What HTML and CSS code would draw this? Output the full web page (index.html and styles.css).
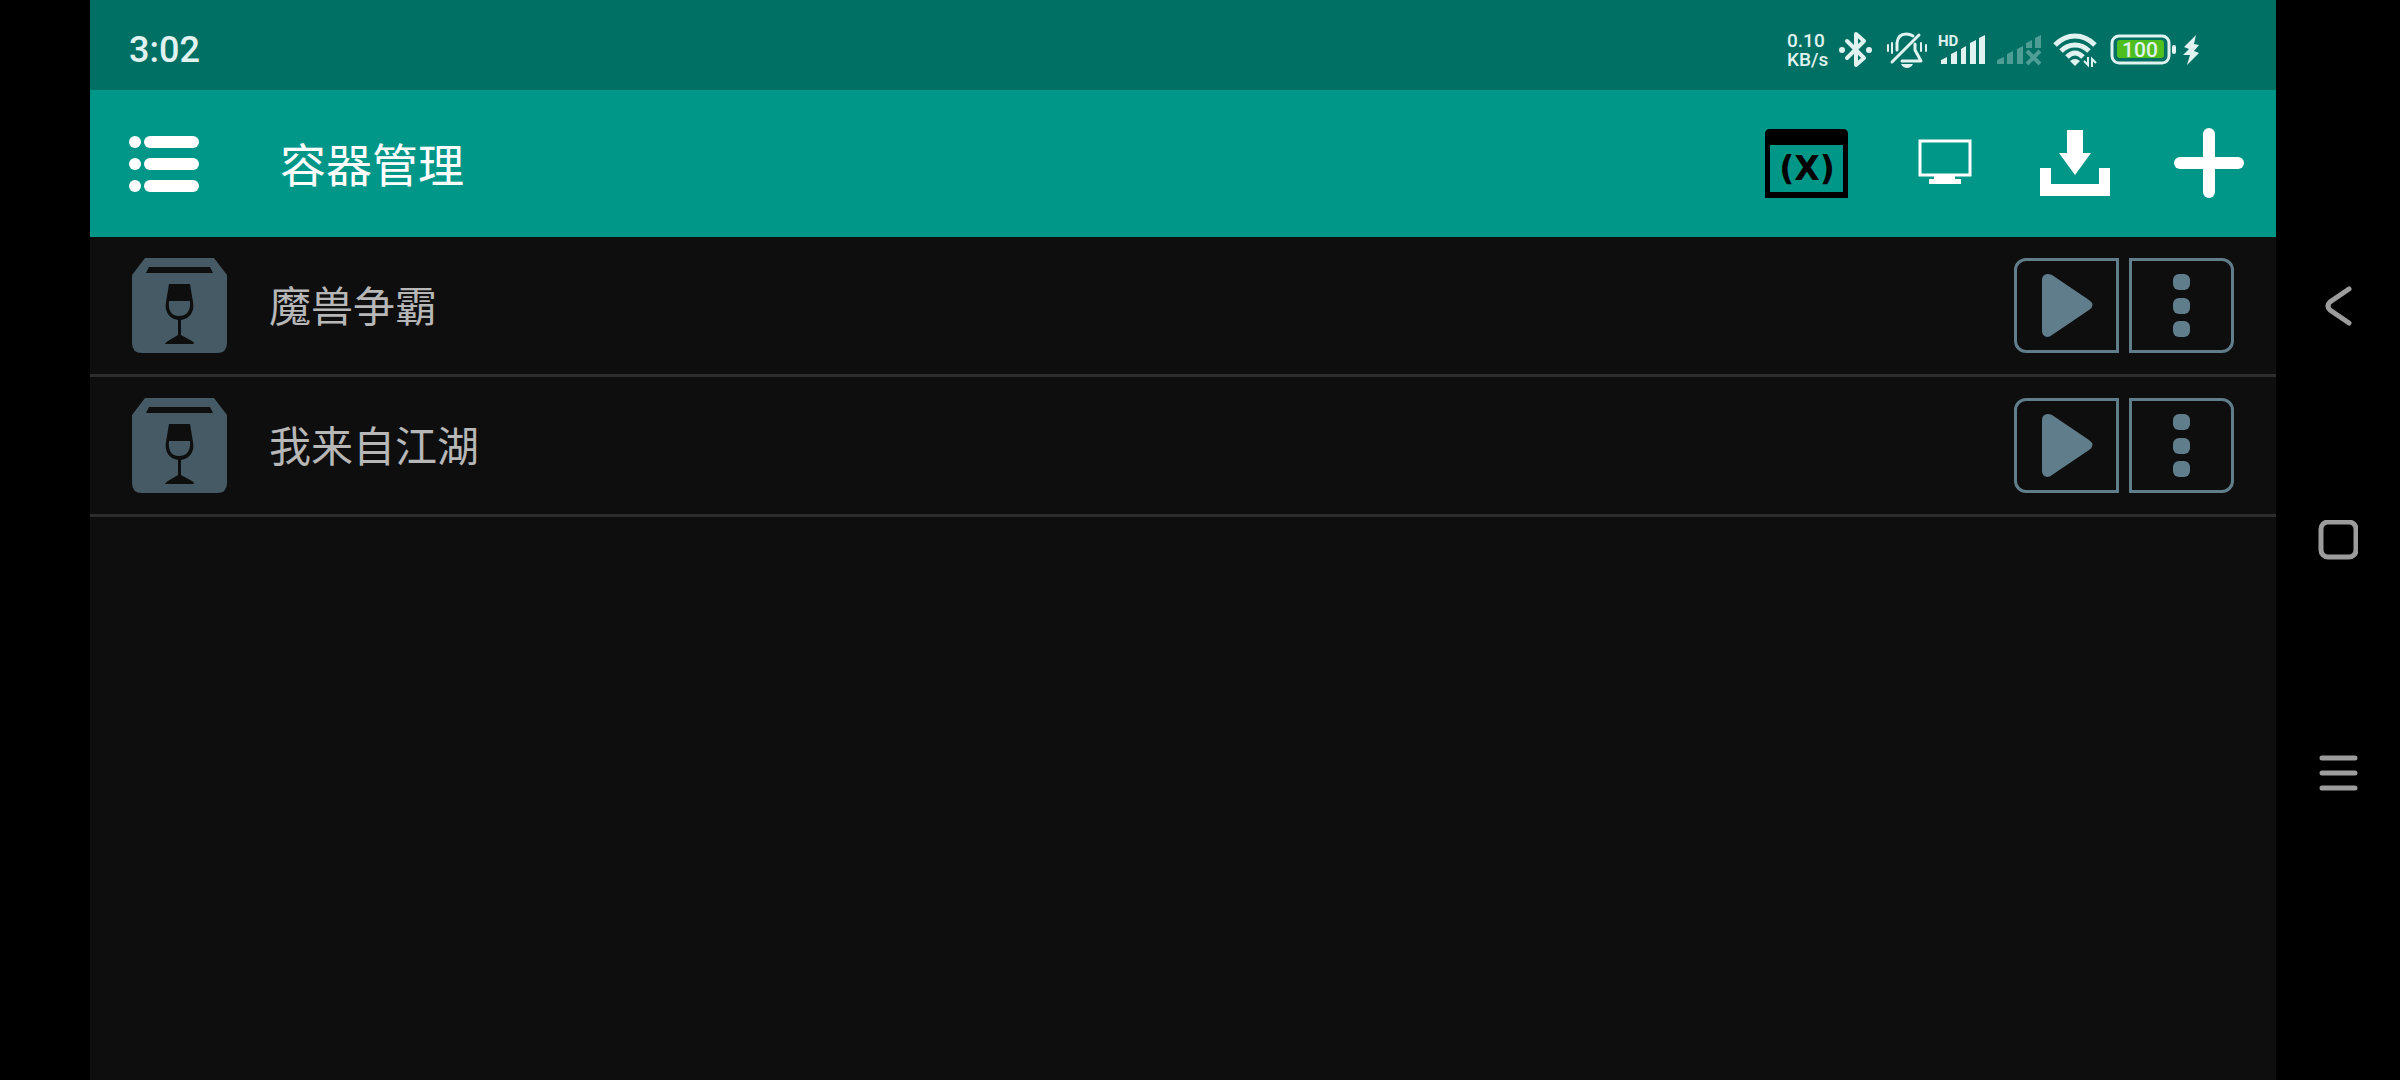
FILE: index.html
```html
<!DOCTYPE html>
<html lang="zh-CN">
<head>
    <meta charset="UTF-8">
    <meta name="viewport" content="width=device-width, initial-scale=1.0">
    <title>容器管理</title>
    <link rel="stylesheet" href="styles.css">
</head>
<body>
    <div class="app">
        <!-- Status bar -->
        <div class="status-bar">
            <time class="clock">3:02</time>
            <div class="status-icons">
                <div class="net-speed">
                    <span>0.10</span>
                    <span>KB/s</span>
                </div>
                <!-- Bluetooth -->
                <svg width="42" height="40" viewBox="0 0 42 40">
                    <path d="M10 11L27 28L19 35V4L27 11L10 28" fill="none" stroke="currentColor" stroke-width="4" stroke-linejoin="round" stroke-linecap="round"/>
                    <circle cx="5" cy="20" r="3" fill="currentColor"/>
                    <circle cx="32" cy="20" r="3" fill="currentColor"/>
                </svg>
                <!-- Muted bell -->
                <svg width="46" height="40" viewBox="0 0 46 40">
                    <g fill="none" stroke="currentColor" stroke-width="3" stroke-linecap="round" stroke-linejoin="round">
                        <path d="M34 5L7 32"/>
                        <path d="M12 20V13Q13 4 21 4Q25 4 28 6"/>
                        <path d="M30 14V20L36 31H17"/>
                        <path d="M3 15V21M7 13V23M36 13V21M41 15V21" stroke-width="2"/>
                    </g>
                    <path d="M16 34H28Q26 38 22 38T16 34Z" fill="currentColor"/>
                </svg>
                <!-- First SIM -->
                <svg width="53" height="40" viewBox="0 0 53 40">
                    <text class="hd-label" x="1" y="16">HD</text>
                    <path d="M4 34V30L10 27V34ZM14 34V24L20 21V34ZM24 34V19L29 16V34ZM33 34V13L39 10V34ZM42 34V8L48 5V34Z" fill="currentColor"/>
                </svg>
                <!-- Second SIM, no service -->
                <svg class="no-service" width="50" height="40" viewBox="0 0 50 40">
                    <path d="M1 34V30L8 27V34ZM11 34V24L17 21V34ZM21 34V19L27 16V34ZM30 18V13L36 10V18ZM39 18V8L45 5V18Z" fill="currentColor"/>
                    <path d="M31 21L44 34M44 21L31 34" stroke="currentColor" stroke-width="4"/>
                </svg>
                <!-- Wi-Fi -->
                <svg width="52" height="40" viewBox="0 0 52 40">
                    <path d="M3 15Q12 6 23 6T43 15M9 21Q15 15 23 15T37 21M15 27Q19 23 23 23T31 27" fill="none" stroke="currentColor" stroke-width="5"/>
                    <path d="M18 31Q23 27 28 31L23 36Z" fill="currentColor"/>
                    <path d="M36 27V35L32 31M40 37V29L44 33" fill="none" stroke="currentColor" stroke-width="2"/>
                </svg>
                <!-- Battery -->
                <svg width="66" height="40" viewBox="0 0 66 40">
                    <rect x="2" y="6" width="57" height="27" rx="7" fill="none" stroke="currentColor" stroke-width="3"/>
                    <rect class="battery-level" x="7" y="10" width="47" height="18" rx="3"/>
                    <rect x="62" y="15" width="4" height="9" rx="2" fill="currentColor"/>
                    <text class="battery-text" x="30" y="27">100</text>
                </svg>
                <!-- Charging -->
                <svg width="17" height="40" viewBox="0 0 17 40">
                    <path d="M14 5L2 17L7 19L1 25L8 25L5 35L17 23L12 21L17 15L12 14Z" fill="currentColor"/>
                </svg>
            </div>
        </div>

        <!-- Toolbar -->
        <header class="toolbar">
            <button class="icon-button" aria-label="菜单">
                <svg width="70" height="70" viewBox="0 0 70 70" fill="currentColor">
                    <rect x="0" y="8" width="12" height="12" rx="6"/>
                    <rect x="15" y="8" width="55" height="12" rx="6"/>
                    <rect x="0" y="30" width="12" height="12" rx="6"/>
                    <rect x="15" y="30" width="55" height="12" rx="6"/>
                    <rect x="0" y="52" width="12" height="12" rx="6"/>
                    <rect x="15" y="52" width="55" height="12" rx="6"/>
                </svg>
            </button>
            <h1 class="title">容器管理</h1>
            <div class="actions">
                <button class="icon-button icon-dark" aria-label="环境变量">
                    <svg width="83" height="70" viewBox="0 0 83 70" fill="currentColor">
                        <path d="M0 70V6Q0 1 5 1H78Q83 1 83 6V70ZM5 64H78V17H5Z" fill-rule="evenodd"/>
                        <text class="var-label" x="42" y="52">(X)</text>
                    </svg>
                </button>
                <button class="icon-button" aria-label="桌面">
                    <svg width="64" height="70" viewBox="0 0 64 70" fill="currentColor">
                        <rect x="8" y="13" width="50" height="34" fill="none" stroke="currentColor" stroke-width="3"/>
                        <rect x="22" y="48" width="21" height="3"/>
                        <rect x="17" y="51" width="32" height="5"/>
                    </svg>
                </button>
                <button class="icon-button" aria-label="导入">
                    <svg width="70" height="70" viewBox="0 0 70 70" fill="currentColor">
                        <path d="M27 2H43V25H51L35 47L19 25H27Z"/>
                        <path d="M0 40H11V56H59V40H70V68H0Z"/>
                    </svg>
                </button>
                <button class="icon-button" aria-label="添加">
                    <svg width="70" height="70" viewBox="0 0 70 70" fill="currentColor">
                        <rect x="29" y="0" width="12" height="70" rx="6"/>
                        <rect x="0" y="29" width="70" height="12" rx="6"/>
                    </svg>
                </button>
            </div>
        </header>

        <!-- Shared row icons -->
        <svg class="symbols" aria-hidden="true">
            <symbol id="container-icon" viewBox="0 0 95 95">
                <path d="M13 0H82L95 17V85Q95 95 85 95H10Q0 95 0 85V17Z" fill="#455a64"/>
                <g fill="#0e0e0e">
                    <path d="M17 9H78L81 15H14Z"/>
                    <path d="M37 26H58L61 44C63 54 57 61 49 62V77L60 83Q62 84 62 86H33Q34 84 36 83L46 77V62C38 61 32 54 34 44Z"/>
                </g>
                <path d="M37 43H58C59 52 55 58 47 58S36 52 37 43Z" fill="#455a64"/>
            </symbol>
            <symbol id="play-icon" viewBox="0 0 51 63">
                <path d="M0 6Q0 1 5 0Q8 0 10 1L47 26Q54 31 47 36L10 61Q8 63 5 63Q0 62 0 57Z"/>
            </symbol>
            <symbol id="more-icon" viewBox="0 0 17 63">
                <rect x="0" y="0" width="17" height="16" rx="6"/>
                <rect x="0" y="24" width="17" height="16" rx="6"/>
                <rect x="0" y="47" width="17" height="16" rx="6"/>
            </symbol>
        </svg>

        <!-- Container list -->
        <ul class="container-list">
            <li class="container-row">
                <svg width="95" height="95"><use href="#container-icon"/></svg>
                <span class="container-name">魔兽争霸</span>
                <button class="row-button run" aria-label="运行">
                    <svg width="51" height="63"><use href="#play-icon"/></svg>
                </button>
                <button class="row-button more" aria-label="更多">
                    <svg width="17" height="63"><use href="#more-icon"/></svg>
                </button>
            </li>
            <li class="container-row">
                <svg width="95" height="95"><use href="#container-icon"/></svg>
                <span class="container-name">我来自江湖</span>
                <button class="row-button run" aria-label="运行">
                    <svg width="51" height="63"><use href="#play-icon"/></svg>
                </button>
                <button class="row-button more" aria-label="更多">
                    <svg width="17" height="63"><use href="#more-icon"/></svg>
                </button>
            </li>
        </ul>
    </div>

    <!-- System navigation -->
    <nav class="system-nav">
        <button class="icon-button" aria-label="返回">
            <svg width="40" height="40" viewBox="0 0 40 40">
                <path d="M31 3L12 16Q8 20 12 24L31 37" fill="none" stroke="currentColor" stroke-width="5" stroke-linecap="round"/>
            </svg>
        </button>
        <button class="icon-button" aria-label="主页">
            <svg width="40" height="40" viewBox="0 0 40 40">
                <rect x="3" y="2" width="35" height="35" rx="7" fill="none" stroke="currentColor" stroke-width="5"/>
            </svg>
        </button>
        <button class="icon-button" aria-label="最近任务">
            <svg width="40" height="40" viewBox="0 0 40 40">
                <path d="M4 4H37M4 19H37M4 34H37" stroke="currentColor" stroke-width="5" stroke-linecap="round"/>
            </svg>
        </button>
    </nav>
</body>
</html>
```
FILE: styles.css
```css
* {
    box-sizing: border-box;
}

body {
    margin: 0;
    min-height: 100vh;
    padding-left: 90px; /* camera cutout side */
    display: flex;
    background-color: #000;
    color: #fff;
    font-family: Roboto, "Noto Sans CJK SC", sans-serif;
}

svg {
    display: block;
    flex: none;
}

.app {
    flex: 1;
    background-color: #0e0e0e;
}

/* Status bar */
.status-bar {
    display: flex;
    align-items: center;
    justify-content: space-between;
    height: 90px;
    padding: 10px 77px 0 39px;
    background-color: #007065;
    color: #e0f3f0;
}

.clock {
    font-size: 36px;
    font-weight: 500;
}

.status-icons {
    display: flex;
    align-items: center;
    gap: 6px;
}

.net-speed {
    display: flex;
    flex-direction: column;
    width: 44px;
    font-size: 19px;
    font-weight: 500;
    line-height: 19px;
}

.hd-label {
    font-size: 15px;
    font-weight: 700;
    fill: currentColor;
}

.no-service {
    opacity: 0.35;
}

.battery-level {
    fill: #4fbf1f;
}

.battery-text {
    font-size: 21px;
    font-weight: 500;
    text-anchor: middle;
    fill: currentColor;
}

/* Toolbar */
.toolbar {
    display: flex;
    align-items: center;
    height: 147px;
    padding: 0 32px 2px 39px;
    background-color: #009788;
}

.icon-button {
    padding: 0;
    border: none;
    background: none;
    color: inherit;
    cursor: pointer;
}

.icon-dark {
    color: #000;
}

.var-label {
    font-family: "DejaVu Sans", sans-serif;
    font-size: 33px;
    font-weight: 700;
    text-anchor: middle;
}

.title {
    margin: 0 0 0 81px;
    padding-bottom: 2px;
    font-size: 46px;
    font-weight: 400;
}

.actions {
    display: flex;
    gap: 64px;
    margin-left: auto;
}

/* Container list */
.symbols {
    display: none;
}

.container-list {
    margin: 0;
    padding: 0;
    list-style: none;
}

.container-row {
    display: flex;
    align-items: center;
    padding: 21px 42px;
    border-bottom: 3px solid #2d2d2d;
}

.container-name {
    flex: 1;
    margin-left: 42px;
    padding-top: 4px;
    font-size: 42px;
    line-height: 60px;
    color: #b7b7b7;
}

.row-button {
    display: flex;
    align-items: center;
    justify-content: center;
    width: 105px;
    height: 95px;
    padding: 0;
    border: 3px solid #607d8b;
    background: none;
    fill: #607d8b;
    cursor: pointer;
}

.run {
    padding-left: 2px;
    border-radius: 12px 0 0 12px;
}

.more {
    margin-left: 10px;
    border-radius: 0 12px 12px 0;
}

/* System navigation */
.system-nav {
    display: flex;
    flex-direction: column;
    align-items: center;
    justify-content: center;
    gap: 194px;
    width: 124px;
    color: #9c9c9c;
}
```
